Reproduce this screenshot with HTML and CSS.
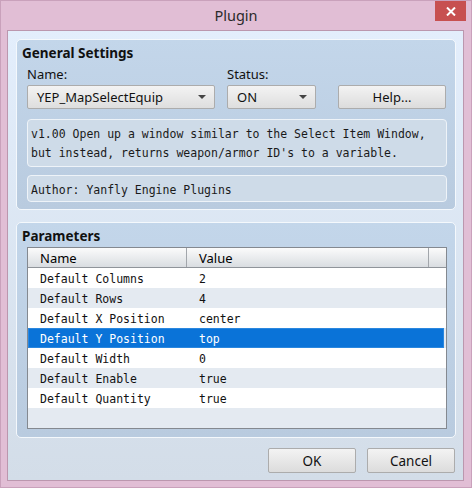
FILE: index.html
```html
<!DOCTYPE html>
<html lang="en">

<head>
    <meta charset="UTF-8">
    <title>Plugin</title>
    <link rel="stylesheet" href="styles.css">
</head>

<body>
    <div class="window">
        <div class="titlebar">
            <span class="title">Plugin</span>
            <button class="close-button" aria-label="Close">
                <svg width="10" height="9" viewBox="0 0 10 9">
                    <path d="M1 0.5 L9 8.5 M9 0.5 L1 8.5" stroke="#fff" stroke-width="2" fill="none"/>
                </svg>
            </button>
        </div>

        <div class="client">
            <!-- General settings group -->
            <div class="group general">
                <div class="group-title">General Settings</div>
                <div class="settings-row">
                    <div class="field name-field">
                        <label>Name:</label>
                        <div class="combo">
                            <span>YEP_MapSelectEquip</span>
                            <span class="arrow"></span>
                        </div>
                    </div>
                    <div class="field status-field">
                        <label>Status:</label>
                        <div class="combo">
                            <span>ON</span>
                            <span class="arrow"></span>
                        </div>
                    </div>
                    <button class="push-button help-button">Help...</button>
                </div>
                <div class="text-box description">v1.00 Open up a window similar to the Select Item Window,<br>but instead, returns weapon/armor ID's to a variable.</div>
                <div class="text-box author">Author: Yanfly Engine Plugins</div>
            </div>

            <!-- Parameters group -->
            <div class="group parameters">
                <div class="group-title">Parameters</div>
                <div class="list">
                    <div class="list-header">
                        <div class="col-name">Name</div>
                        <div class="col-value">Value</div>
                        <div class="col-rest"></div>
                    </div>
                    <div class="list-row">
                        <div class="col-name">Default Columns</div>
                        <div class="col-value">2</div>
                    </div>
                    <div class="list-row">
                        <div class="col-name">Default Rows</div>
                        <div class="col-value">4</div>
                    </div>
                    <div class="list-row">
                        <div class="col-name">Default X Position</div>
                        <div class="col-value">center</div>
                    </div>
                    <div class="list-row selected">
                        <div class="col-name">Default Y Position</div>
                        <div class="col-value">top</div>
                    </div>
                    <div class="list-row">
                        <div class="col-name">Default Width</div>
                        <div class="col-value">0</div>
                    </div>
                    <div class="list-row">
                        <div class="col-name">Default Enable</div>
                        <div class="col-value">true</div>
                    </div>
                    <div class="list-row">
                        <div class="col-name">Default Quantity</div>
                        <div class="col-value">true</div>
                    </div>
                    <div class="list-row empty"></div>
                </div>
            </div>

            <div class="dialog-buttons">
                <button class="push-button">OK</button>
                <button class="push-button">Cancel</button>
            </div>
        </div>
    </div>
</body>

</html>
```

FILE: styles.css
```css
html, body {
    margin: 0;
    padding: 0;
}

body {
    width: 472px;
    height: 488px;
    overflow: hidden;
    font-family: "Noto Sans", "Open Sans", sans-serif;
    font-size: 13px;
    color: #000;
}

.window {
    box-sizing: border-box;
    width: 472px;
    height: 488px;
    background: #e1bed5;
    border: 1px solid #c9a1bb;
    display: flex;
    flex-direction: column;
}

.titlebar {
    height: 29px;
    display: flex;
    justify-content: center;
    align-items: center;
    position: relative;
}

.title {
    font-size: 14.5px;
    color: #2a2a2a;
    margin-top: -1px;
}

.close-button {
    position: absolute;
    top: 0;
    right: 5px;
    width: 31px;
    height: 20px;
    border: none;
    padding: 0;
    background: #c75050;
    display: flex;
    justify-content: center;
    align-items: center;
}

.client {
    box-sizing: border-box;
    margin: 0 7px 6px 6px;
    flex: 1;
    border: 1px solid #bb97ae;
    background: linear-gradient(#e3eefc, #d3dde8);
    padding: 8px 7px 0 8px;
    display: flex;
    flex-direction: column;
}

.group {
    box-sizing: border-box;
    border: 1px solid #f4f8fc;
    border-radius: 5px;
    background: linear-gradient(#c3d6ea, #b9cbdf);
    padding: 3px 8px 6px 10px;
}

.general {
    height: 171px;
}

.parameters {
    height: 216px;
    margin-top: 12px;
}

.group-title {
    font-weight: bold;
    font-size: 13.5px;
    line-height: 21px;
    margin-left: -5px;
    color: #111;
}

.settings-row {
    display: flex;
    align-items: flex-end;
}

.field label {
    display: block;
    line-height: 21px;
    color: #111;
}

.name-field {
    width: 188px;
}

.status-field {
    width: 89px;
    margin-left: 12px;
}

.combo {
    box-sizing: border-box;
    height: 24px;
    border: 1px solid #acacac;
    border-radius: 2px;
    background: linear-gradient(#f3f3f3, #dedede);
    display: flex;
    align-items: center;
    justify-content: space-between;
    padding: 0 8px 0 9px;
    color: #111;
}

.arrow {
    width: 0;
    height: 0;
    border-left: 4px solid transparent;
    border-right: 4px solid transparent;
    border-top: 4px solid #444;
}

.push-button {
    box-sizing: border-box;
    height: 24px;
    border: 1px solid #acacac;
    border-radius: 2px;
    background: linear-gradient(#f3f3f3, #dcdcdc);
    font-family: "Noto Sans", "Open Sans", sans-serif;
    font-size: 13px;
    color: #111;
    padding: 0;
}

.help-button {
    width: 108px;
    margin-left: 22px;
}

.text-box {
    box-sizing: border-box;
    border: 1px solid #eef3f8;
    border-radius: 4px;
    background: #cedbe8;
    font-family: "DejaVu Sans Mono", "Liberation Mono", monospace;
    font-size: 11.5px;
    line-height: 19px;
    color: #1a1a1a;
    padding: 5px 3px 4px;
}

.description {
    height: 48px;
    margin-top: 10px;
}

.author {
    height: 27px;
    margin-top: 8px;
}

.list {
    box-sizing: border-box;
    height: 182px;
    border: 1px solid #848990;
    background: #e4eaf1;
    font-family: "DejaVu Sans Mono", "Liberation Mono", monospace;
    font-size: 11.5px;
}

.list-header {
    display: flex;
    height: 20px;
    box-sizing: border-box;
    border-bottom: 1px solid #8f949a;
    background: linear-gradient(#fbfbfb, #d9dde1);
    font-family: "Noto Sans", "Open Sans", sans-serif;
    font-size: 13px;
    line-height: 20px;
}

.list-header > div {
    box-sizing: border-box;
    border-right: 1px solid #a2a6ab;
}

.list-header .col-rest {
    flex: 1;
    border-right: none;
}

.col-name {
    width: 159px;
    padding-left: 12px;
    box-sizing: border-box;
}

.col-value {
    width: 242px;
    padding-left: 12px;
    box-sizing: border-box;
}

.list-row {
    display: flex;
    height: 19px;
    padding-top: 1px;
    line-height: 20px;
    color: #111;
}

.list-row:nth-child(even) {
    background: #fff;
}

.list-row:nth-child(odd) {
    background: #e4eaf1;
}

.list-row.selected {
    background: #0a73d8;
    color: #fff;
    margin-right: 2px;
    box-shadow: inset 0 0 0 1px #2a87df;
}

.dialog-buttons {
    display: flex;
    justify-content: flex-end;
    gap: 11px;
    margin-top: 10px;
    padding-right: 1px;
}

.dialog-buttons .push-button {
    width: 88px;
    height: 25px;
    font-size: 13.5px;
}
```
